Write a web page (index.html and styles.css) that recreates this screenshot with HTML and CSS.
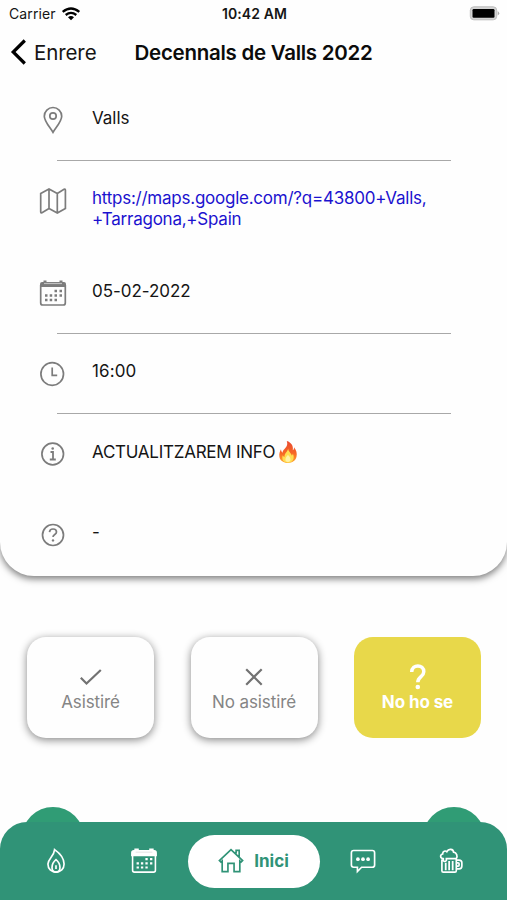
FILE: index.html
```html
<!DOCTYPE html>
<html lang="ca">
<head>
<meta charset="utf-8">
<meta name="viewport" content="width=device-width">
<title>Decennals de Valls 2022</title>
<link rel="stylesheet" href="styles.css">
</head>
<body>
<svg width="0" height="0" class="defs">
  <symbol id="calendar" viewBox="0 0 28 28">
    <path d="M1.700 6v18q0 2 2 2h20.600q2 0 2-2V6" fill="none" stroke="currentColor" stroke-width="1.700"/>
    <path d="M1 8V5q0-2 2-2h1.500V1.500h3V3h13V1.500h3V3H25q2 0 2 2v3z" fill="currentColor"/>
    <path class="cal-gap" d="M5 4.500h18" stroke-width="1.200"/>
    <path d="M15.500 12h2.500m2.500 0H23M6 16.500h2.500m2.200 0h2.500m2.300 0H18m2.500 0H23M6 21h2.500m2.200 0h2.500m2.300 0H18" stroke="currentColor" stroke-width="2.400"/>
  </symbol>
</svg>
<div class="screen">
  <header class="status">
    <span class="carrier">Carrier
      <svg width="20" height="14" viewBox="0 0 20 14" fill="none" stroke="#000" stroke-width="2.300"><path d="M1.700 4.900Q10-2 18.300 4.900M4.700 8Q10 3.700 15.300 8"/><path d="M7 10.300Q10 7.800 13 10.300L10 13.300z" fill="#000" stroke="none"/></svg>
    </span>
    <span class="clock">10:42 AM</span>
    <svg class="battery" width="31" height="15" viewBox="0 0 31 15"><rect x="1.300" y=".8" width="26.400" height="13" rx="3.500" fill="#d4d4d4" stroke="#bdbdbd"/><rect x="3.500" y="3" width="22" height="8.700" rx="1.200"/><path d="M28.700 5q3 2.300 0 4.600z" fill="#aaa"/></svg>
  </header>
  <nav class="navbar">
    <a class="back"><svg width="17" height="26" viewBox="0 0 17 26" fill="none" stroke="#000" stroke-width="3.200"><path d="M14.800 1.500 3.200 13l11.600 11.500"/></svg><span>Enrere</span></a>
    <h1>Decennals de Valls 2022</h1>
  </nav>
  <main class="card">
    <div class="row">
      <svg class="icon" viewBox="0 0 28 28"><path d="M14 26.300C11.500 21.800 5.300 15.500 5.300 10.200a8.700 8.700 0 0 1 17.400 0c0 5.300-6.200 11.600-8.700 16.100z"/><circle cx="14" cy="10" r="3.200"/></svg>
      <p>Valls</p>
    </div>
    <div class="row tall">
      <svg class="icon" viewBox="0 0 28 28"><path d="M1.700 6.500 10 2l8.300 4.500L25 2.300q1.400-.5 1.400 1V21.500L18.300 26 10 21.500 3 25.800q-1.300.4-1.300-1zM10 2v19.500M18.300 6.500V26"/></svg>
      <p class="link">https://maps.google.com/?q=43800+Valls,<br>+Tarragona,+Spain</p>
    </div>
    <div class="row">
      <svg class="icon solid"><use href="#calendar"/></svg>
      <p class="date">05-02-2022</p>
    </div>
    <div class="row">
      <svg class="icon" viewBox="0 0 28 28"><circle cx="13.200" cy="14" r="11.300"/><path d="M13.200 7.500v7.800h5"/></svg>
      <p class="time">16:00</p>
    </div>
    <div class="row plain">
      <svg class="icon" viewBox="0 0 28 28"><circle cx="13.700" cy="14" r="10.800"/><path d="M11.500 12h2.500v7.300M10.800 19.500h6" stroke-width="1.800"/><circle cx="13.700" cy="8.500" r="1.300" fill="currentColor" stroke="none"/></svg>
      <p class="info">ACTUALITZAREM INFO<svg class="flame" viewBox="0 0 20 24"><defs><linearGradient id="fire" x2="0" y2="1"><stop stop-color="#e94b32"/><stop offset=".55" stop-color="#f66626"/><stop offset="1" stop-color="#ffa82d"/></linearGradient></defs><path fill="url(#fire)" d="M8.800 1c4.500 1.200 6.800 5.200 6 9.300 1-.6 1.300-1.700 1.200-3 2.400 2.700 3.300 6.300 2.500 9.500-1 4-4.200 6.200-8.500 6.200S2 20.600 1.400 16.700C.9 13.500 2 11 3 9.300c.1 1.600.6 2.700 1.500 3.500C4.700 8.500 11 7.500 8.800 1z"/><path fill="#ffdd52" d="M10.300 8.500c-.4 3 3 4.300 3.300 7 .9-.4 1.200-1.200 1.200-2 2.200 4.500.2 9.200-4.800 9.200s-6.500-3.500-5.300-7.400c.5 1 1.100 1.500 1.900 1.800-.4-3.800 2.500-4.600 3.700-8.600z"/><path fill="#fff2a8" d="M10 15c3 2.200 3.600 7-.1 7-3.600 0-3-4.500.1-7z"/></svg></p>
    </div>
    <div class="row plain">
      <svg class="icon" viewBox="0 0 28 28"><circle cx="14" cy="14" r="10.500"/><path d="M10.500 11.100c.3-4.300 7-4 7 0 0 2.600-3.500 2.300-3.500 5" stroke-width="1.700"/><circle cx="14" cy="19.400" r="1.200" fill="currentColor" stroke="none"/></svg>
      <p>-</p>
    </div>
  </main>
  <section class="actions">
    <button><svg viewBox="0 0 24 24"><path d="M1.800 12.800l5.700 5.700L21.800 5"/></svg><span>Asistiré</span></button>
    <button><svg viewBox="0 0 24 24"><path d="M4.200 4.200l15.500 15.500m0-15.500L4.200 19.700"/></svg><span>No asistiré</span></button>
    <button class="selected"><svg viewBox="0 0 24 24"><path d="M5.700 7C6-1.200 17.800-1 17.800 6.800c0 5-6 4.700-6 10.500" stroke-width="3.500"/><circle cx="11.800" cy="22" r="2.300" fill="#fff" stroke="none"/></svg><span>No ho se</span></button>
  </section>
  <footer class="tabs">
    <i class="bump left"></i><i class="bump right"></i>
    <div class="bar">
      <a><svg viewBox="0 0 28 28"><path d="M12.500 1.700c6.500 4.500 10.200 10 10.200 15.600 0 5.200-3.700 8.700-8.700 8.700s-8.700-3.500-8.700-8.700c0-5.700 6.500-8 7.200-15.600z"/><path d="M14 12.500c3 2.500 4.300 5.500 4.300 8.500 0 3-1.700 5-4.300 5s-4.300-2-4.300-5c0-3 1.300-6 4.300-8.500zM14 18.500v4"/></svg></a>
      <a><svg><use href="#calendar"/></svg></a>
      <a class="active"><svg viewBox="0 0 28 28"><path d="M1.500 13.500 14 1.800l12.500 11.700-1.700 1.700-1.300-1.200v11.500h-6.200v-9h-6.600v9H4.500V14l-1.300 1.200zM19.500 6V2.500h3.300v7"/></svg><span>Inici</span></a>
      <a><svg viewBox="0 0 28 28"><path d="M4 2.700h20q2.500 0 2.500 2.500v13q0 2.500-2.500 2.500H12.500L8 25.300V20.700H4q-2.500 0-2.500-2.500v-13q0-2.500 2.500-2.500z"/><g fill="currentColor" stroke="none"><circle cx="8.500" cy="12" r="2"/><circle cx="14" cy="12" r="2"/><circle cx="19.500" cy="12" r="2"/></g></svg></a>
      <a><svg viewBox="0 0 28 28"><path d="M4.200 12.500v12q0 1.500 1.500 1.500h12.500q1.500 0 1.500-1.500V11.500H9v2q-1.800 2-3.300 0v-2C2 11 2 7.300 5 6.500 5 3.300 8 2.500 9.500 4c2-4 7-3 7.300.5C20 5 21.500 8.500 19.700 11.500M19.700 13h3q3 0 3 3v3.500q0 3-3 3h-3v-3h2q1 0 1-1v-1.500q0-1-1-1h-2"/><path d="M8.300 16v8M12 14v10M15.800 14v10" stroke-width="1.900"/></svg></a>
    </div>
  </footer>
</div>
</body>
</html>
```
FILE: styles.css
```css
* { box-sizing: border-box; }
body { margin: 0; background: #fff; color: #151515; font-family: Inter, "Liberation Sans", sans-serif; }
.defs { position: absolute; }
.screen { width: 507px; height: 900px; overflow: hidden; position: relative; display: flex; flex-direction: column; background: #fefefe; }
.status { height: 28px; display: grid; grid-template-columns: 1fr auto 1fr; align-items: center; padding: 0 7px 1px 9px; position: relative; z-index: 2; background: #fefefe; }
.carrier { display: flex; align-items: center; gap: 5px; font-size: 14px; letter-spacing: .1px; }
.clock { font-size: 14px; font-weight: 600; letter-spacing: .1px; }
.battery { justify-self: end; }
.navbar { height: 52px; display: grid; grid-template-columns: 1fr auto 1fr; align-items: center; padding: 0 10px 4px; position: relative; z-index: 2; background: #fefefe; }
.back { display: flex; align-items: center; gap: 7px; font-size: 20.500px; letter-spacing: -.1px; }
h1 { margin: 0; font-size: 20.500px; font-weight: 600; letter-spacing: -.28px; color: #0b0b0b; }
.card { height: 496px; flex: none; border-radius: 0 0 34px 34px; background: #fefefe; box-shadow: 0 3px 7px rgba(0,0,0,.5); }
.row { height: 80.500px; display: flex; align-items: flex-start; gap: 25px; padding: 26px 0 0 39px; position: relative; }
.row::after { content: ""; position: absolute; left: 57px; width: 394px; bottom: 0; height: 1px; background: #a8a8a8; }
.row.tall { height: 92.500px; }
.row.tall::after, .row.plain::after { display: none; }
.icon { width: 28px; height: 28px; flex: none; color: #7c7c7c; fill: none; stroke: currentColor; stroke-width: 1.700; }
.solid { stroke: none; }
.cal-gap { stroke: #ddd; opacity: .7; }
.row p { margin: 1.500px 0 0; font-size: 17px; line-height: 20.500px; letter-spacing: -.05px; white-space: nowrap; }
.row .link { color: #1b12cf; letter-spacing: -.24px; }
.row .time { letter-spacing: .1px; }
.row .info { letter-spacing: -.25px; display: flex; align-items: center; }
.flame { width: 20px; height: 24px; margin: -4px 0 -4px 3px; }
.actions { display: grid; grid-template-columns: repeat(3, 127px); gap: 36.500px; padding: 61px 0 0 27px; }
button { height: 101px; border: 0; border-radius: 19px; background: #fefefe; color: #858585; font: 17px Inter, "Liberation Sans", sans-serif; letter-spacing: -.1px; padding: 2px 0 0; display: flex; flex-direction: column; align-items: center; justify-content: center; gap: 3px; box-shadow: 0 2px 8px rgba(0,0,0,.48); }
button svg { width: 24px; height: 24px; fill: none; stroke: #727272; stroke-width: 2.200; overflow: visible; }
button span { line-height: 20px; white-space: nowrap; }
button.selected { background: #e8d84a; color: #fff; font-weight: 700; box-shadow: none; }
button.selected svg { stroke: #fff; }
.tabs { height: 78px; margin-top: auto; position: relative; }
.bump { position: absolute; top: -15px; width: 62px; height: 62px; border-radius: 50%; background: #309c75; }
.bump.left { left: 22px; }
.bump.right { right: 22px; }
.bar { height: 78px; position: relative; display: grid; grid-template-columns: 87.500px 87.500px 132px 87.500px 87.500px; justify-content: center; align-items: center; border-radius: 27px 27px 0 0; background: #309377; color: #fff; }
.bar a { display: flex; align-items: center; justify-content: center; height: 53px; }
.bar svg { width: 26px; height: 26px; fill: none; stroke: currentColor; stroke-width: 1.800; }
.bar .active { background: #fff; color: #309377; border-radius: 27px; gap: 10px; font-size: 17px; font-weight: 700; }
```
